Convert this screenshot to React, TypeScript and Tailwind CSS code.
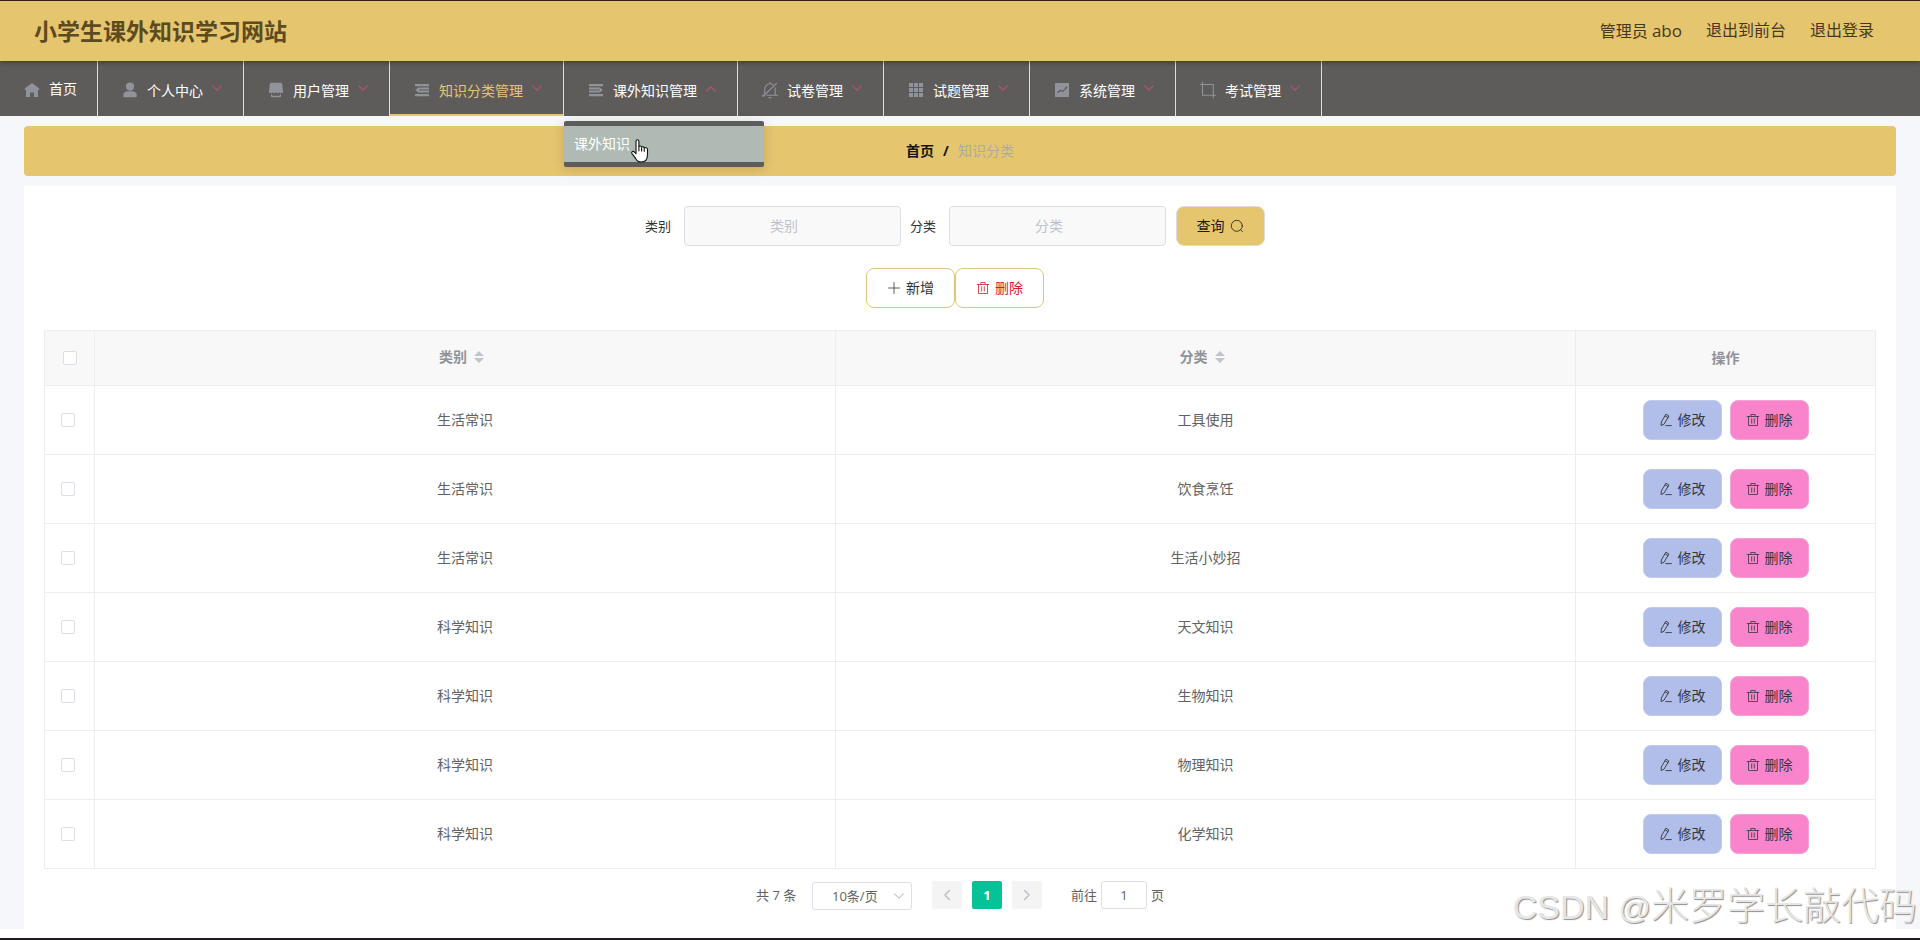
import React from "react";

type IconProps = { className?: string };

const HomeIcon = () => (
  <svg viewBox="0 0 18 18" className="size-[18px]" fill="#909399">
    <path d="M9 2 1.800 7.600V9H3v7h4.100v-4.600h3.800V16H15V9h1.200V7.600Z" />
  </svg>
);
const UserIcon = () => (
  <svg viewBox="0 0 18 18" className="size-[18px]" fill="#909399">
    <circle cx="9" cy="5.600" r="4.100" />
    <path d="M6.200 10.300h5.600c2.200.3 4 1.800 4 4.200v.8a.9.900 0 0 1-.9.900H3.100a.9.900 0 0 1-.9-.9v-.8c0-2.400 1.800-3.900 4-4.200Z" />
  </svg>
);
const ShopIcon = () => (
  <svg viewBox="0 0 18 18" className="size-[18px]" fill="#909399">
    <path d="M4.300 1.800h9.400c.8 0 1.300.5 1.500 1.300l.8 7.400c0 1-.7 1.700-1.600 1.700-.7 0-1.300-.4-1.800-1-.5.6-1.100 1-1.800 1s-1.300-.4-1.800-1c-.5.6-1.100 1-1.800 1s-1.300-.4-1.800-1c-.5.6-1.100 1-1.700 1-1 0-1.700-.7-1.700-1.700l.8-7.400c.1-.8.700-1.300 1.500-1.300Z" />
    <path d="M4 13.200h1.200v1.600h7.600v-1.600H14v2c0 .6-.4 1-1 1H5c-.6 0-1-.4-1-1Z" />
  </svg>
);
const FoldIcon = () => (
  <svg viewBox="0 0 18 18" className="size-[18px]" fill="#909399">
    <path d="M2 3h14v2.200H2zM6 6.500h10v2H6zM6 9.500h10v2H6zM2 13h14v2.200H2zM6 6v6L2.300 9z" />
  </svg>
);
const UnfoldIcon = () => (
  <svg viewBox="0 0 18 18" className="size-[18px]" fill="#909399">
    <path d="M2 3h14v2.200H2zM2 6.500h10v2H2zM2 9.500h10v2H2zM2 13h14v2.200H2zM12.200 6v6l3.700-3z" />
  </svg>
);
const MuteBellIcon = () => (
  <svg viewBox="0 0 18 18" className="size-[18px]" fill="none" stroke="#909399" strokeWidth="1.100" strokeLinecap="round">
    <path d="M3.800 12.500V8A5.200 5.200 0 0 1 9 2.800c1.300 0 2.500.5 3.400 1.300M14.200 6.800v7.400H6M1.600 14.200h1M14.200 14.200h2.200M9 1.300v1.500M15.500 2.300 2 15.500M8 16.600h2" />
  </svg>
);
const GridIcon = () => (
  <svg viewBox="0 0 18 18" className="size-[18px]" fill="#909399">
    <path d="M2 2h4v4H2zM7 2h4v4H7zM12 2h4v4h-4zM2 7h4v4H2zM7 7h4v4H7zM12 7h4v4h-4zM2 12h4v4H2zM7 12h4v4H7zM12 12h4v4h-4z" />
  </svg>
);
const MarketingIcon = () => (
  <svg viewBox="0 0 18 18" className="size-[18px]">
    <rect x="2" y="2" width="14" height="14" rx="0.500" fill="#909399" />
    <path d="m4.500 11.800 2.800-2.600 2.300 1.400 3.600-3.600" fill="none" stroke="#5e5c5b" strokeWidth="1.200" />
    <circle cx="13.200" cy="6.400" r="0.900" fill="#5e5c5b" />
  </svg>
);
const CropIcon = () => (
  <svg viewBox="0 0 18 18" className="size-[18px]" fill="none" stroke="#909399" strokeWidth="1.100" strokeLinecap="round">
    <path d="M3.500 1.300v12.900h13.200M1.300 3.500h13v13.200" />
  </svg>
);
const Chevron = ({ className }: IconProps) => (
  <svg viewBox="0 0 12 12" className={className} fill="none" stroke="currentColor" strokeWidth="1.100" strokeLinecap="round" strokeLinejoin="round">
    <path d="m1.600 3.800 4.400 4.300 4.400-4.300" />
  </svg>
);
const TrashIcon = () => (
  <svg viewBox="0 0 14 14" className="size-[14px]" fill="none" stroke="currentColor" strokeWidth="0.800" strokeLinecap="round" strokeLinejoin="round">
    <path d="M1.200 3.500h11.600M2.500 3.500v9h9v-9M4.800 3.300V1.500h4.400v1.800M5.700 5.800v4.400M8.300 5.800v4.400" />
  </svg>
);
const EditIcon = () => (
  <svg viewBox="0 0 14 14" className="size-[14px]" fill="none" stroke="currentColor" strokeWidth="0.900" strokeLinecap="round" strokeLinejoin="round">
    <path d="M7.200 1.400 9.900 3 5 11.200l-2.900 1.400.2-3.200ZM6.300 3l2.700 1.600M6.800 12.600h5.600" />
  </svg>
);
const SearchIcon = () => (
  <svg viewBox="0 0 14 14" className="size-[14px]" fill="none" stroke="currentColor" strokeWidth="0.800" strokeLinecap="round">
    <circle cx="6.800" cy="6.800" r="5.500" />
    <path d="m10.600 10.800 1.900 1.900" />
  </svg>
);
const PlusIcon = () => (
  <svg viewBox="0 0 14 14" className="size-[14px]" fill="none" stroke="currentColor" strokeWidth="0.800" strokeLinecap="round">
    <path d="M7 1.500v11M1.500 7h11" />
  </svg>
);
const HandCursor = () => (
  <svg viewBox="0 0 18 24" className="absolute left-[67px] top-[18px] h-6 w-[18px]" fill="#fff" stroke="#111" strokeWidth="1.100" strokeLinejoin="round">
    <path d="M5 2.300c0-2 2.900-2 2.900 0v5.300c.5-1 2.600-.8 2.700.6.600-.8 2.500-.6 2.600.8.700-.7 3.300-.6 3.300 1.200v5.300c0 4.200-2 7.500-6.400 7.500-3 0-4.300-1.500-5.500-3.600L1 14.600c-1-1.700 1-2.900 2.200-1.700L5 14.700Z" />
    <path d="M7.900 7.600v4.600M10.600 8.500v3.900M13.200 9.300v3.400" fill="none" />
  </svg>
);

const menus = [
  { label: "个人中心", icon: <UserIcon /> },
  { label: "用户管理", icon: <ShopIcon /> },
  { label: "知识分类管理", icon: <FoldIcon />, active: true },
  { label: "课外知识管理", icon: <UnfoldIcon />, open: true, children: ["课外知识"] },
  { label: "试卷管理", icon: <MuteBellIcon /> },
  { label: "试题管理", icon: <GridIcon /> },
  { label: "系统管理", icon: <MarketingIcon /> },
  { label: "考试管理", icon: <CropIcon /> },
];

const rows = [
  ["生活常识", "工具使用"],
  ["生活常识", "饮食烹饪"],
  ["生活常识", "生活小妙招"],
  ["科学知识", "天文知识"],
  ["科学知识", "生物知识"],
  ["科学知识", "物理知识"],
  ["科学知识", "化学知识"],
];

const Checkbox = () => <span className="size-[14px] rounded-[2px] border border-[#dcdfe6] bg-white" />;

const SortCarets = () => (
  <svg viewBox="0 0 10 14" className="ml-[7px] h-[14px] w-[10px]" fill="#c0c4cc">
    <path d="M0 6 5 1l5 5ZM0 8h10l-5 5Z" />
  </svg>
);

const SearchField = ({ label, className }: { label: string; className: string }) => (
  <>
    <label className="w-[26px] text-[13px] text-[#303133]">{label}</label>
    <div className={`flex h-10 w-[217px] items-center justify-center rounded border border-[#dcdfe6] bg-[#f9f9f9] pr-[17px] text-[#bfc2ca] ${className}`}>
      {label}
    </div>
  </>
);

function TopBar() {
  return (
    <header className="relative z-10 flex h-[61px] items-center justify-between border-t border-[#33200f] bg-[#e6c56f] pl-[34px] pr-[46px] shadow-[0_1px_5px_rgba(0,0,0,0.45)]">
      <h1 className="pb-px text-[23px] font-bold text-[#5d4b20]">小学生课外知识学习网站</h1>
      <div className="flex gap-6 text-base text-[#45391c]">
        <span>管理员 <span className="text-[17px]">abo</span></span>
        <span>退出到前台</span>
        <span>退出登录</span>
      </div>
    </header>
  );
}

function NavBar() {
  return (
    <nav className="flex h-[55px] bg-[#5e5c5b] text-white">
      <div className="flex w-[98px] items-center border-r border-[#dedede] pl-[23px]">
        <span className="mt-[3px]"><HomeIcon /></span>
        <span className="ml-[8px]">首页</span>
      </div>
      {menus.map((m) => (
        <div
          key={m.label}
          className={`relative flex items-center border-r border-[#dedede] pl-[23px] pr-[20px] ${m.active ? "text-[#e6c56f]" : ""}`}
        >
          <span className="mt-[3px]">{m.icon}</span>
          <span className="ml-[8px] mt-1 whitespace-nowrap">{m.label}</span>
          <Chevron className={m.open ? "ml-[8px] size-3 rotate-180 text-[#b85276]" : "mb-px ml-[8px] size-3 text-[#b85276]"} />
          {m.active && <span className="absolute inset-x-0 bottom-0 h-[2px] bg-[#e6c56f]" />}
          {m.children && (
            <div className="absolute left-0 top-[60px] z-20 w-[200px] rounded-[2px] bg-[#5e5c5b] py-[5px] shadow-[0_2px_12px_rgba(0,0,0,0.15)]">
              {m.children.map((c) => (
                <div key={c} className="flex h-9 items-center bg-[#aebab3] px-[10px]">{c}</div>
              ))}
              <HandCursor />
            </div>
          )}
        </div>
      ))}
    </nav>
  );
}

function DataTable() {
  return (
    <div className="mx-5 mt-[22px] border-l border-t border-[#ebeef0] text-[#606266]">
      <div className="grid h-[55px] grid-cols-[50px_741px_740px_300px] bg-[#f8f8f8] font-bold text-[#909399] [&>div]:border-b [&>div]:border-r [&>div]:border-[#ebeef0]">
        <div className="flex items-center justify-center"><Checkbox /></div>
        <div className="flex items-center justify-center pb-[2px] pr-[7px]">类别<SortCarets /></div>
        <div className="flex items-center justify-center pb-[2px] pr-[7px]">分类<SortCarets /></div>
        <div className="flex items-center justify-center">操作</div>
      </div>
      {rows.map(([kind, name]) => (
        <div key={name} className="grid h-[69px] grid-cols-[50px_741px_740px_300px] [&>div]:border-b [&>div]:border-r [&>div]:border-[#ebeef0]">
          <div className="flex items-center pl-4"><Checkbox /></div>
          <div className="flex items-center justify-center">{kind}</div>
          <div className="flex items-center justify-center">{name}</div>
          <div className="flex items-center justify-center gap-2 pl-px text-[#35373d]">
            <button className="flex h-10 w-[79px] items-center justify-center gap-[5px] rounded-lg border border-[#c3cbe8] bg-[#b1bee9] pr-px"><EditIcon />修改</button>
            <button className="flex h-10 w-[79px] items-center justify-center gap-[5px] rounded-lg border border-[#f3a3d4] bg-[#fa84cc] pr-px"><TrashIcon />删除</button>
          </div>
        </div>
      ))}
    </div>
  );
}

function Pagination() {
  return (
    <div className="mt-3 flex h-7 pl-[732px] text-[13px] leading-7 text-[#606266]">
      <span className="w-[56px] whitespace-nowrap">共 7 条</span>
      <div className="mt-px flex h-7 w-[100px] items-center justify-between rounded-[3px] border border-[#dcdfe6] pl-[19px] pr-[6px]">
        <span className="pb-px">10条/页</span>
        <Chevron className="size-3 text-[#c0c4cc]" />
      </div>
      <div className="ml-5 flex gap-[10px] text-[#c0c4cc]">
        <span className="flex w-[30px] items-center justify-center rounded-[2px] bg-[#f4f4f5]"><Chevron className="size-3 rotate-90 stroke-[1.600]" /></span>
        <span className="w-[30px] rounded-[2px] bg-[#06c397] text-center font-bold text-white">1</span>
        <span className="flex w-[30px] items-center justify-center rounded-[2px] bg-[#f4f4f5]"><Chevron className="size-3 -rotate-90 stroke-[1.600]" /></span>
      </div>
      <span className="ml-[29px]">前往</span>
      <span className="ml-1 flex w-[46px] items-center justify-center rounded-[3px] border border-[#dcdfe6]">1</span>
      <span className="ml-1">页</span>
    </div>
  );
}

export default function App() {
  return (
    <div className="relative flex h-[940px] w-[1920px] flex-col overflow-hidden bg-white font-['Open_Sans','Noto_Sans_CJK_SC',sans-serif] text-sm leading-5">
      <TopBar />
      <NavBar />
      <main className="flex h-[813px] flex-col bg-[#f6f7fa] px-6 pt-[10px]">
        <div className="flex h-[50px] items-center justify-center rounded-[4px] bg-[#e6c56f] text-[#151515]">
          <span className="font-bold">首页</span>
          <span className="mx-[9px] font-bold">/</span>
          <span className="text-[#a9ada0]">知识分类</span>
        </div>
        <section className="mt-[10px] flex-1 bg-white pt-5">
          <div className="flex items-center pl-[621px]">
            <SearchField label="类别" className="ml-[13px] mr-[9px]" />
            <SearchField label="分类" className="ml-[13px] mr-[10px]" />
            <button className="flex h-10 w-[89px] items-center justify-center gap-[5px] rounded-lg border border-[#dcdcdc] bg-[#e6c56f] pr-px text-[#1c1a14]">
              查询<SearchIcon />
            </button>
          </div>
          <div className="mt-[22px] flex pl-[842px]">
            <button className="flex h-10 w-[89px] items-center justify-center gap-[5px] rounded-lg border border-[#e0c674] text-[#333]"><PlusIcon />新增</button>
            <button className="flex h-10 w-[89px] items-center justify-center gap-[5px] rounded-lg border border-[#e0c674] text-[#d0202c]"><TrashIcon />删除</button>
          </div>
          <DataTable />
          <Pagination />
        </section>
      </main>
      <div className="mt-[9px] h-[2px] bg-[#201c20]" />
      <div className="absolute bottom-[4px] right-[3px] whitespace-nowrap font-['Liberation_Sans','Noto_Sans_CJK_SC',sans-serif] text-[38px] font-light leading-[56px] text-[#e6e6e6] [text-shadow:1px_1px_1px_#8c8c8c]">
        <span className="text-[34px]">CSDN <span className="text-[32px]">@</span></span>米罗学长敲代码
      </div>
    </div>
  );
}
